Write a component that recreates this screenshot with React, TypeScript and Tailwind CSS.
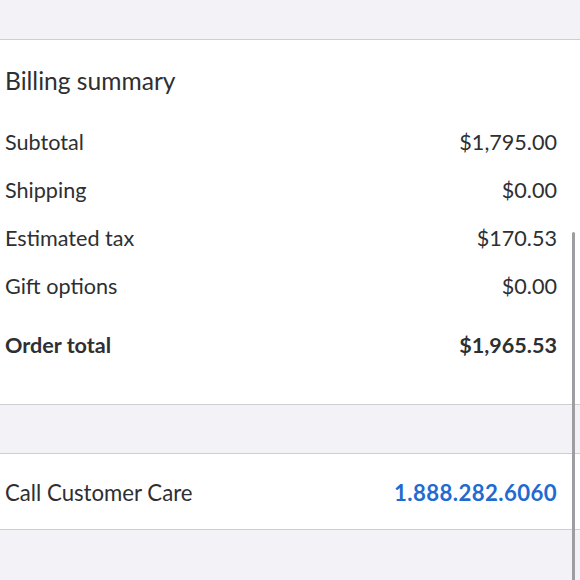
const rows = [
  { label: "Subtotal", value: "$1,795.00" },
  { label: "Shipping", value: "$0.00" },
  { label: "Estimated tax", value: "$170.53" },
  { label: "Gift options", value: "$0.00" },
];

const App = () => {
  return (
    <div
      className="relative flex h-[580px] w-[580px] flex-col overflow-hidden bg-[#f2f2f7] text-[#2e2f32]"
      style={{ fontFamily: "Lato, 'Noto Sans', sans-serif" }}
    >
      <div className="h-[40px] shrink-0 border-b border-[#cdcdd2]" />
      <section className="flex h-[364px] shrink-0 flex-col bg-white pl-[5px] pr-[23px]">
        <h2 className="mt-[25px] text-[24.6px] leading-[32px]">Billing summary</h2>
        <div className="mt-[21px] flex flex-col">
          {rows.map((r) => (
            <div key={r.label} className="flex h-[48px] items-center justify-between text-[21.6px]">
              <span>{r.label}</span>
              <span>{r.value}</span>
            </div>
          ))}
        </div>
        <div className="mt-[11px] flex h-[48px] items-center justify-between text-[21.6px] font-bold">
          <span>Order total</span>
          <span>$1,965.53</span>
        </div>
      </section>
      <div className="h-[50px] shrink-0 border-y border-[#cdcdd2]" />
      <div className="flex h-[76px] shrink-0 items-center justify-between border-b border-[#cdcdd2] bg-white pl-[5px] pr-[23px] pt-[3px] text-[22.2px]">
        <span>Call Customer Care</span>
        <span className="font-bold tracking-[0.4px] text-[#1f6bd0]">1.888.282.6060</span>
      </div>
      <div className="absolute right-[5px] top-[232px] h-[360px] w-[3px] rounded-full bg-[#9e9ea2]" />
    </div>
  );
};

export default App;
